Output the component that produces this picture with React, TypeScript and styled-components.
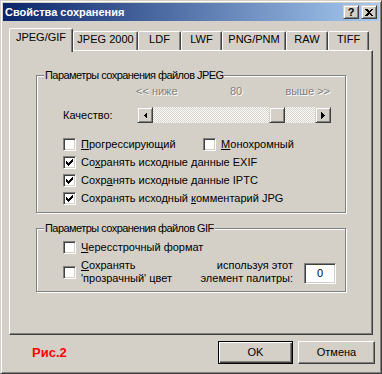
import React from 'react'
import styled, { createGlobalStyle, css } from 'styled-components'

const FACE = '#D4D0C8'
const SHADOW = '#808080'
const DARK = '#404040'

const TABS = [
  { name: 'JPEG/GIF', width: 64 },
  { name: 'JPEG 2000', width: 65 },
  { name: 'LDF', width: 43 },
  { name: 'LWF', width: 41 },
  { name: 'PNG/PNM', width: 64 },
  { name: 'RAW', width: 42 },
  { name: 'TIFF', width: 41 },
]

const QUALITY = 80

const GlobalStyle = createGlobalStyle`
  html, body {
    margin: 0;
    padding: 0;
    background: ${FACE};
  }
  body {
    font-family: 'Liberation Sans', Arial, sans-serif;
    font-size: 11px;
    line-height: 13px;
    color: #000;
  }
  * {
    box-sizing: border-box;
  }
`

const raised = css`
  background: ${FACE};
  border: 1px solid;
  border-color: ${FACE} ${DARK} ${DARK} ${FACE};
  box-shadow: inset 1px 1px #fff, inset -1px -1px ${SHADOW};
`

const sunken = css`
  background: #fff;
  border: 1px solid;
  border-color: ${SHADOW} #fff #fff ${SHADOW};
  box-shadow: inset 1px 1px ${DARK}, inset -1px -1px ${FACE};
`

const CheckMark = () => (
  <svg width="7" height="7" viewBox="0 0 7 7" shapeRendering="crispEdges">
    {[2, 3, 4, 3, 2, 1, 0].map((top, i) => (
      <rect key={i} x={i} y={top} width="1" height="3" fill="#000" />
    ))}
  </svg>
)

const Arrow = ({ dir }: { dir: 'left' | 'right' }) => (
  <svg width="4" height="7" viewBox="0 0 4 7" shapeRendering="crispEdges">
    <polygon
      points={dir === 'left' ? '4,0 4,7 0.5,3.5' : '0,0 0,7 3.5,3.5'}
      fill="#000"
    />
  </svg>
)

const CloseGlyph = () => (
  <svg width="8" height="7" viewBox="0 0 8 7" shapeRendering="crispEdges">
    <path d="M0 0h2l2 2 2-2h2v1L5 3.5 8 6v1H6L4 5 2 7H0V6l3-2.5L0 1z" fill="#000" />
  </svg>
)

const Checkbox = ({ checked }: { checked?: boolean }) => (
  <Box>{checked && <CheckMark />}</Box>
)

const App = () => {
  // thumb travels over the track between the two arrow buttons
  const thumbOffset = Math.floor(((194 - 32 - 16) * QUALITY) / 100)
  return (
    <>
      <GlobalStyle />
      <Window>
        <TitleBar>
          <Title>Свойства сохранения</Title>
          <CaptionButton>?</CaptionButton>
          <CaptionButton>
            <CloseGlyph />
          </CaptionButton>
        </TitleBar>
        <Body>
          <TabStrip>
            {TABS.map((tab, i) => (
              <Tab key={tab.name} $active={i === 0} $w={tab.width}>
                {tab.name}
              </Tab>
            ))}
          </TabStrip>
          <Panel>
            <Group>
              <Legend>Параметры сохранения файлов JPEG</Legend>
              <Rows>
                <SliderLabels>
                  <Disabled>&lt;&lt; ниже</Disabled>
                  <Disabled $center>{QUALITY}</Disabled>
                  <Disabled $end>выше &gt;&gt;</Disabled>
                </SliderLabels>
                <QualityRow>
                  <FieldLabel>Качество:</FieldLabel>
                  <ScrollBar>
                    <ArrowButton>
                      <Arrow dir="left" />
                    </ArrowButton>
                    <Track>
                      <Thumb style={{ marginLeft: thumbOffset }} />
                    </Track>
                    <ArrowButton>
                      <Arrow dir="right" />
                    </ArrowButton>
                  </ScrollBar>
                </QualityRow>
                <CheckRow $top={15}>
                  <CheckItem $w={140}>
                    <Checkbox />
                    <span>
                      <u>П</u>рогрессирующий
                    </span>
                  </CheckItem>
                  <CheckItem>
                    <Checkbox />
                    <span>
                      <u>М</u>онохромный
                    </span>
                  </CheckItem>
                </CheckRow>
                <CheckRow>
                  <CheckItem>
                    <Checkbox checked />
                    <span>
                      Со<u>х</u>ранять исходные данные EXIF
                    </span>
                  </CheckItem>
                </CheckRow>
                <CheckRow>
                  <CheckItem>
                    <Checkbox checked />
                    <span>
                      Сохр<u>а</u>нять исходные данные IPTC
                    </span>
                  </CheckItem>
                </CheckRow>
                <CheckRow>
                  <CheckItem>
                    <Checkbox checked />
                    <span>
                      Сохранять исходный <u>к</u>омментарий JPG
                    </span>
                  </CheckItem>
                </CheckRow>
              </Rows>
            </Group>
            <Group $gif>
              <Legend>Параметры сохранения файлов GIF</Legend>
              <Rows $gif>
                <CheckRow $top={6}>
                  <CheckItem>
                    <Checkbox />
                    <span>
                      <u>Ч</u>ересстрочный формат
                    </span>
                  </CheckItem>
                </CheckRow>
                <TransparentRow>
                  <CheckItem>
                    <Checkbox />
                    <span>
                      <u>С</u>охранять
                      <br />
                      'прозрачный' цвет
                    </span>
                  </CheckItem>
                  <PaletteText>
                    используя этот
                    <br />
                    элемент палитры:
                  </PaletteText>
                  <NumberBox>0</NumberBox>
                </TransparentRow>
              </Rows>
            </Group>
          </Panel>
          <Footer>
            <Caption>Рис.2</Caption>
            <PushButton $default>OK</PushButton>
            <PushButton>Отмена</PushButton>
          </Footer>
        </Body>
      </Window>
    </>
  )
}

export default App

const Window = styled.div`
  width: 382px;
  height: 374px;
  background: ${FACE};
  border: 1px solid;
  border-color: ${FACE} ${DARK} ${DARK} ${FACE};
  box-shadow: inset 1px 1px #fff, inset -1px -1px ${SHADOW};
  padding: 2px;
  display: flex;
  flex-direction: column;
`

const TitleBar = styled.div`
  height: 18px;
  display: flex;
  align-items: center;
  gap: 2px;
  padding: 0 2px;
  background: linear-gradient(to right, #0a246a, #a6caf0);
`

const Title = styled.div`
  flex: 1;
  padding-top: 1px;
  color: #fff;
  font-weight: bold;
  font-size: 11px;
`

const CaptionButton = styled.div`
  ${raised};
  width: 16px;
  height: 14px;
  display: flex;
  align-items: center;
  justify-content: center;
  font-weight: bold;
  font-size: 11px;
  line-height: 11px;
`

const Body = styled.div`
  flex: 1;
  display: flex;
  flex-direction: column;
  padding: 7px 4px 0 6px;
`

const TabStrip = styled.div`
  height: 22px;
  display: flex;
  align-items: flex-end;
`

const Tab = styled.div<{ $active?: boolean; $w: number }>`
  width: ${(p) => p.$w}px;
  height: ${(p) => (p.$active ? 24 : 19)}px;
  margin-bottom: ${(p) => (p.$active ? -2 : 0)}px;
  padding-top: ${(p) => (p.$active ? 2 : 1)}px;
  position: relative;
  z-index: ${(p) => (p.$active ? 1 : 0)};
  background: ${FACE};
  border: 1px solid;
  border-bottom: none;
  border-color: #fff ${DARK} transparent #fff;
  border-radius: 2px 2px 0 0;
  box-shadow: inset -1px 0 ${SHADOW};
  text-align: center;
  white-space: nowrap;
`

const Panel = styled.div`
  width: 364px;
  height: 285px;
  border: 1px solid;
  border-color: #fff ${DARK} ${DARK} #fff;
  box-shadow: inset -1px -1px ${SHADOW};
  padding: 18px 0 0 26px;
`

const Group = styled.fieldset<{ $gif?: boolean }>`
  width: 310px;
  margin: ${(p) => (p.$gif ? 9 : 0)}px 0 0 0;
  padding: 0;
  min-inline-size: 0;
  border: 1px solid ${SHADOW};
  box-shadow: inset 1px 1px #fff, 1px 1px #fff;
`

const Legend = styled.legend`
  margin-left: 7px;
  padding: 0 1px;
  line-height: 13px;
  letter-spacing: -0.55px;
  background: ${FACE};
`

const Rows = styled.div<{ $gif?: boolean }>`
  display: flex;
  flex-direction: column;
  padding: 0 9px ${(p) => (p.$gif ? 6 : 7)}px 26px;
`

const SliderLabels = styled.div`
  margin: 3px 0 0 73px;
  width: 194px;
  display: grid;
  grid-template-columns: 1fr auto 1fr;
`

const Disabled = styled.span<{ $center?: boolean; $end?: boolean }>`
  color: ${SHADOW};
  text-shadow: 1px 1px #fff;
  ${(p) => p.$center && 'margin-left: 6px;'}
  ${(p) => p.$end && 'text-align: right;'}
`

const QualityRow = styled.div`
  margin-top: 9px;
  display: flex;
  align-items: center;
`

const FieldLabel = styled.span`
  width: 74px;
`

const ScrollBar = styled.div`
  width: 194px;
  height: 16px;
  display: flex;
  background: repeating-conic-gradient(#fff 0 25%, ${FACE} 0 50%) 0 0 / 2px 2px;
`

const ArrowButton = styled.div`
  ${raised};
  width: 16px;
  height: 16px;
  display: flex;
  align-items: center;
  justify-content: center;
`

const Track = styled.div`
  flex: 1;
  display: flex;
`

const Thumb = styled.div`
  ${raised};
  width: 16px;
  height: 16px;
`

const CheckRow = styled.div<{ $top?: number }>`
  margin-top: ${(p) => p.$top ?? 5}px;
  display: flex;
  align-items: center;
  height: 13px;
`

const CheckItem = styled.label<{ $w?: number }>`
  display: flex;
  align-items: center;
  gap: 5px;
  ${(p) => p.$w && `width: ${p.$w}px;`}
  white-space: nowrap;
`

const Box = styled.span`
  ${sunken};
  width: 13px;
  height: 13px;
  flex: none;
  display: flex;
  align-items: center;
  justify-content: center;
`

const TransparentRow = styled.div`
  margin-top: 5px;
  height: 26px;
  display: flex;
  align-items: center;
`

const PaletteText = styled.div`
  margin-left: auto;
  text-align: right;
`

const NumberBox = styled.div`
  ${sunken};
  align-self: flex-end;
  margin: 0 0 1px 11px;
  width: 32px;
  height: 21px;
  display: flex;
  align-items: center;
  justify-content: center;
`

const Footer = styled.div`
  margin-top: 6px;
  display: flex;
  align-items: center;
  gap: 5px;
`

const Caption = styled.span`
  margin: 0 auto 0 23px;
  color: #ff0000;
  font-weight: bold;
  font-size: 13px;
`

const PushButton = styled.div<{ $default?: boolean }>`
  width: ${(p) => (p.$default ? 75 : 77)}px;
  height: 23px;
  display: flex;
  align-items: center;
  justify-content: center;
  background: ${FACE};
  border: 1px solid;
  ${(p) =>
    p.$default
      ? `border-color: #000;
         box-shadow: inset 1px 1px #fff, inset -1px -1px ${DARK}, inset -2px -2px ${SHADOW};`
      : `border-color: #fff ${DARK} ${DARK} #fff;
         box-shadow: inset -1px -1px ${SHADOW};`}
`
